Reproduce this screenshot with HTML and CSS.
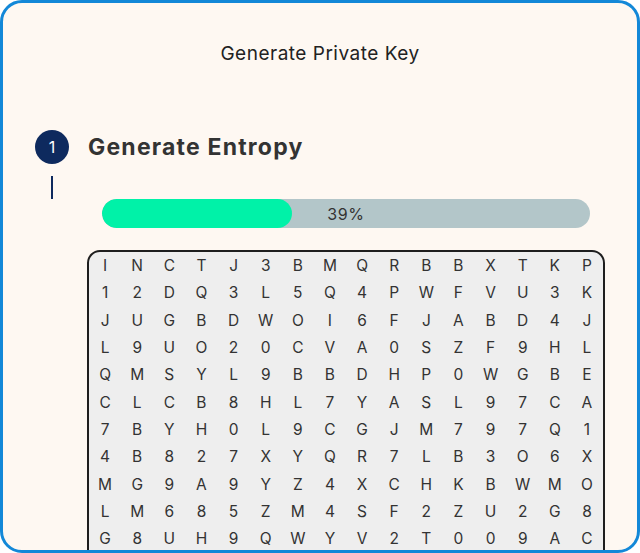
FILE: index.html
```html
<!DOCTYPE html>
<html lang="en">
<head>
<meta charset="utf-8">
<title>Generate Private Key</title>
<link rel="stylesheet" href="styles.css">
</head>
<body>
<div class="frame">
  <h1 class="title">Generate Private Key</h1>
  <div class="step">
    <div class="step-head">
      <div class="step-num">1</div>
      <h2 class="step-title">Generate Entropy</h2>
    </div>
    <div class="connector"></div>
    <div class="progress">
      <div class="progress-fill" style="width:39%"></div>
      <span class="progress-label">39%</span>
    </div>
    <div class="grid">
      <span>I</span><span>N</span><span>C</span><span>T</span><span>J</span><span>3</span><span>B</span><span>M</span><span>Q</span><span>R</span><span>B</span><span>B</span><span>X</span><span>T</span><span>K</span><span>P</span>
      <span>1</span><span>2</span><span>D</span><span>Q</span><span>3</span><span>L</span><span>5</span><span>Q</span><span>4</span><span>P</span><span>W</span><span>F</span><span>V</span><span>U</span><span>3</span><span>K</span>
      <span>J</span><span>U</span><span>G</span><span>B</span><span>D</span><span>W</span><span>O</span><span>I</span><span>6</span><span>F</span><span>J</span><span>A</span><span>B</span><span>D</span><span>4</span><span>J</span>
      <span>L</span><span>9</span><span>U</span><span>O</span><span>2</span><span>0</span><span>C</span><span>V</span><span>A</span><span>0</span><span>S</span><span>Z</span><span>F</span><span>9</span><span>H</span><span>L</span>
      <span>Q</span><span>M</span><span>S</span><span>Y</span><span>L</span><span>9</span><span>B</span><span>B</span><span>D</span><span>H</span><span>P</span><span>0</span><span>W</span><span>G</span><span>B</span><span>E</span>
      <span>C</span><span>L</span><span>C</span><span>B</span><span>8</span><span>H</span><span>L</span><span>7</span><span>Y</span><span>A</span><span>S</span><span>L</span><span>9</span><span>7</span><span>C</span><span>A</span>
      <span>7</span><span>B</span><span>Y</span><span>H</span><span>0</span><span>L</span><span>9</span><span>C</span><span>G</span><span>J</span><span>M</span><span>7</span><span>9</span><span>7</span><span>Q</span><span>1</span>
      <span>4</span><span>B</span><span>8</span><span>2</span><span>7</span><span>X</span><span>Y</span><span>Q</span><span>R</span><span>7</span><span>L</span><span>B</span><span>3</span><span>O</span><span>6</span><span>X</span>
      <span>M</span><span>G</span><span>9</span><span>A</span><span>9</span><span>Y</span><span>Z</span><span>4</span><span>X</span><span>C</span><span>H</span><span>K</span><span>B</span><span>W</span><span>M</span><span>O</span>
      <span>L</span><span>M</span><span>6</span><span>8</span><span>5</span><span>Z</span><span>M</span><span>4</span><span>S</span><span>F</span><span>2</span><span>Z</span><span>U</span><span>2</span><span>G</span><span>8</span>
      <span>G</span><span>8</span><span>U</span><span>H</span><span>9</span><span>Q</span><span>W</span><span>Y</span><span>V</span><span>2</span><span>T</span><span>0</span><span>0</span><span>9</span><span>A</span><span>C</span>
    </div>
  </div>
</div>
</body>
</html>
```

FILE: styles.css
```css
html, body {
  margin: 0;
  padding: 0;
  background: #ffffff;
}

body {
  font-family: Inter, "Noto Sans", "Liberation Sans", sans-serif;
  color: #222;
}

.frame {
  box-sizing: border-box;
  width: 640px;
  height: 553px;
  border: 3px solid #1388d8;
  border-radius: 22px;
  background: #fef8f2;
  overflow: hidden;
}

.title {
  margin: 0;
  padding-top: 39px;
  font-size: 19px;
  line-height: 24px;
  font-weight: 400;
  letter-spacing: 0.5px;
  text-align: center;
  color: #222;
}

.step {
  padding-left: 32px;
}

.step-head {
  display: flex;
  align-items: center;
  gap: 19px;
  margin-top: 64px;
}

.step-num {
  width: 34px;
  height: 34px;
  border-radius: 50%;
  background: #0e2a5e;
  color: #fff;
  font-size: 16px;
  display: flex;
  align-items: center;
  justify-content: center;
}

.step-title {
  margin: 0;
  font-size: 23px;
  font-weight: 700;
  letter-spacing: 1.2px;
  color: #333;
}

.connector {
  width: 2px;
  height: 23px;
  margin: 12px 0 0 16px;
  background: #0e2a5e;
}

.progress {
  position: relative;
  margin-left: 67px;
  width: 488px;
  height: 29px;
  border-radius: 15px;
  background: #b3c6c9;
  overflow: hidden;
}

.progress-fill {
  height: 100%;
  border-radius: 15px;
  background: #00f2a8;
}

.progress-label {
  position: absolute;
  inset: 0;
  display: flex;
  align-items: center;
  justify-content: center;
  font-size: 16px;
  letter-spacing: 0.6px;
  color: #333;
}

.grid {
  margin: 22px 0 0 52px;
  width: 518px;
  box-sizing: border-box;
  border: 2px solid #1e1e1e;
  border-radius: 13px;
  background: #eeeeee;
  display: grid;
  grid-template-columns: repeat(16, 1fr);
  grid-auto-rows: 27.3px;
  padding-bottom: 20px;
}

.grid span {
  display: flex;
  align-items: center;
  justify-content: center;
  font-size: 15.5px;
  color: #333;
}
```
